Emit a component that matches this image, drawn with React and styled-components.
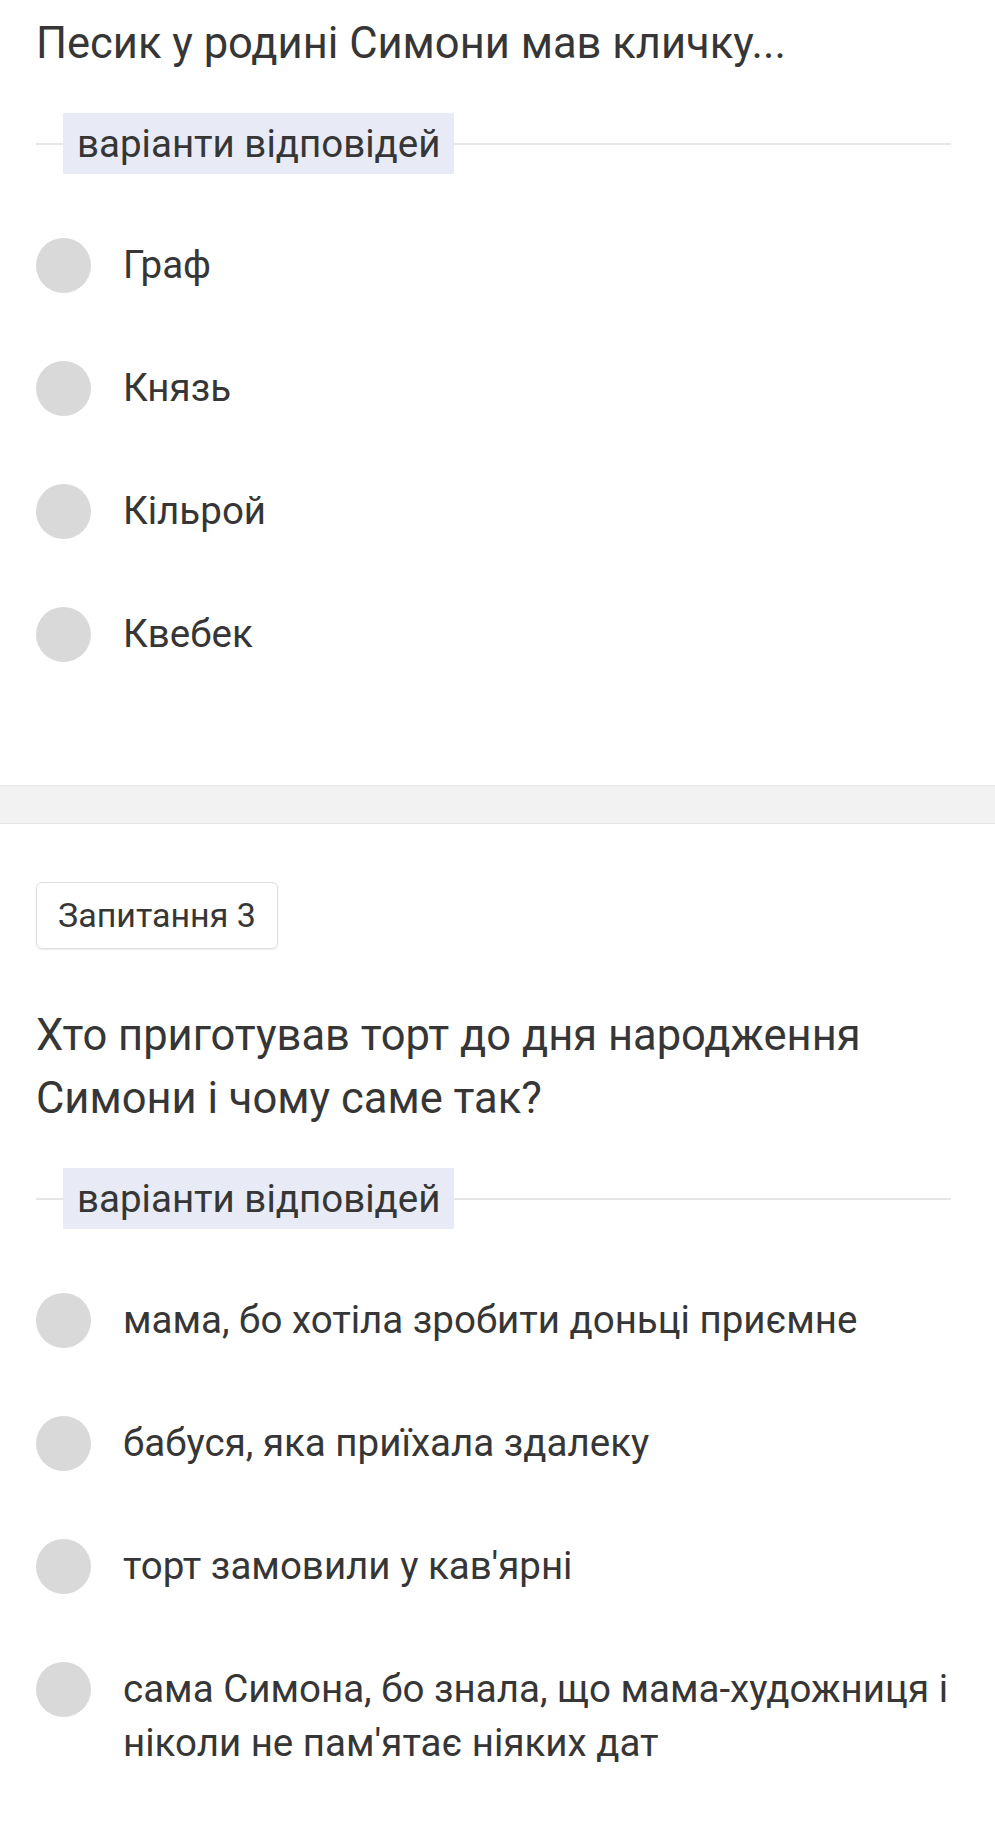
import React from 'react'
import styled, { createGlobalStyle } from 'styled-components'

const GlobalStyle = createGlobalStyle`
  body {
    margin: 0;
    background: #ffffff;
    font-family: Roboto, 'Noto Sans', sans-serif;
    color: #333333;
  }
`

const questions = [
  {
    id: 2,
    text: 'Песик у родині Симони мав кличку...',
    options: ['Граф', 'Князь', 'Кільрой', 'Квебек'],
  },
  {
    id: 3,
    text: 'Хто приготував торт до дня народження Симони і чому саме так?',
    options: [
      'мама, бо хотіла зробити доньці приємне',
      'бабуся, яка приїхала здалеку',
      "торт замовили у кав'ярні",
      "сама Симона, бо знала, що мама-художниця і ніколи не пам'ятає ніяких дат",
    ],
  },
]

export default function App() {
  return (
    <>
      <GlobalStyle />
      <Page>
        <Question>
          <Title>{questions[0].text}</Title>
          <Divider><Label>варіанти відповідей</Label></Divider>
          <Options>
            {questions[0].options.map(o => (
              <Option key={o}><Radio /><OptionText>{o}</OptionText></Option>
            ))}
          </Options>
        </Question>

        <Band />

        <Question $top={58}>
          <Chip>Запитання {questions[1].id}</Chip>
          <Title $gap={55}>{questions[1].text}</Title>
          <Divider><Label>варіанти відповідей</Label></Divider>
          <Options>
            {questions[1].options.map(o => (
              <Option key={o}><Radio /><OptionText>{o}</OptionText></Option>
            ))}
          </Options>
        </Question>
      </Page>
    </>
  )
}

const Page = styled.div`
  display: flex;
  flex-direction: column;
  width: 995px;
`

const Question = styled.section`
  display: flex;
  flex-direction: column;
  padding: ${p => p.$top || 12}px 44px 0 36px;
`

const Title = styled.h2`
  margin: ${p => p.$gap || 0}px 0 0;
  font-size: 43.5px;
  line-height: 63px;
  font-weight: 400;
  color: #363636;
`

const Divider = styled.div`
  margin-top: 38px;
  display: flex;
  align-items: center;
  padding-left: 27px;
  background: linear-gradient(#e6e6e6, #e6e6e6) 0 50% / 100% 2px no-repeat;
`

const Label = styled.span`
  background: #e8ebf5;
  height: 61px;
  line-height: 61px;
  padding: 0 14px;
  font-size: 38.5px;
  color: #363636;
`

const Options = styled.div`
  display: flex;
  flex-direction: column;
  margin-top: 30px;
  padding-bottom: 89px;
`

const Option = styled.label`
  display: flex;
  align-items: flex-start;
  gap: 32px;
  padding: 34px 0;
`

const Radio = styled.span`
  flex: none;
  width: 55px;
  height: 55px;
  border-radius: 50%;
  background: #d9d9d9;
`

const OptionText = styled.span`
  font-size: 38.5px;
  line-height: 54px;
  color: #363636;
`

const Band = styled.div`
  height: 37px;
  background: #f2f2f2;
  border-top: 1px solid #e6e6e6;
  border-bottom: 1px solid #e6e6e6;
`

const Chip = styled.div`
  align-self: flex-start;
  height: 65px;
  line-height: 65px;
  padding: 0 21px;
  border: 1px solid #dedede;
  border-radius: 6px;
  box-shadow: 0 1px 2px rgba(0, 0, 0, 0.08);
  font-size: 34px;
  color: #363636;
`
